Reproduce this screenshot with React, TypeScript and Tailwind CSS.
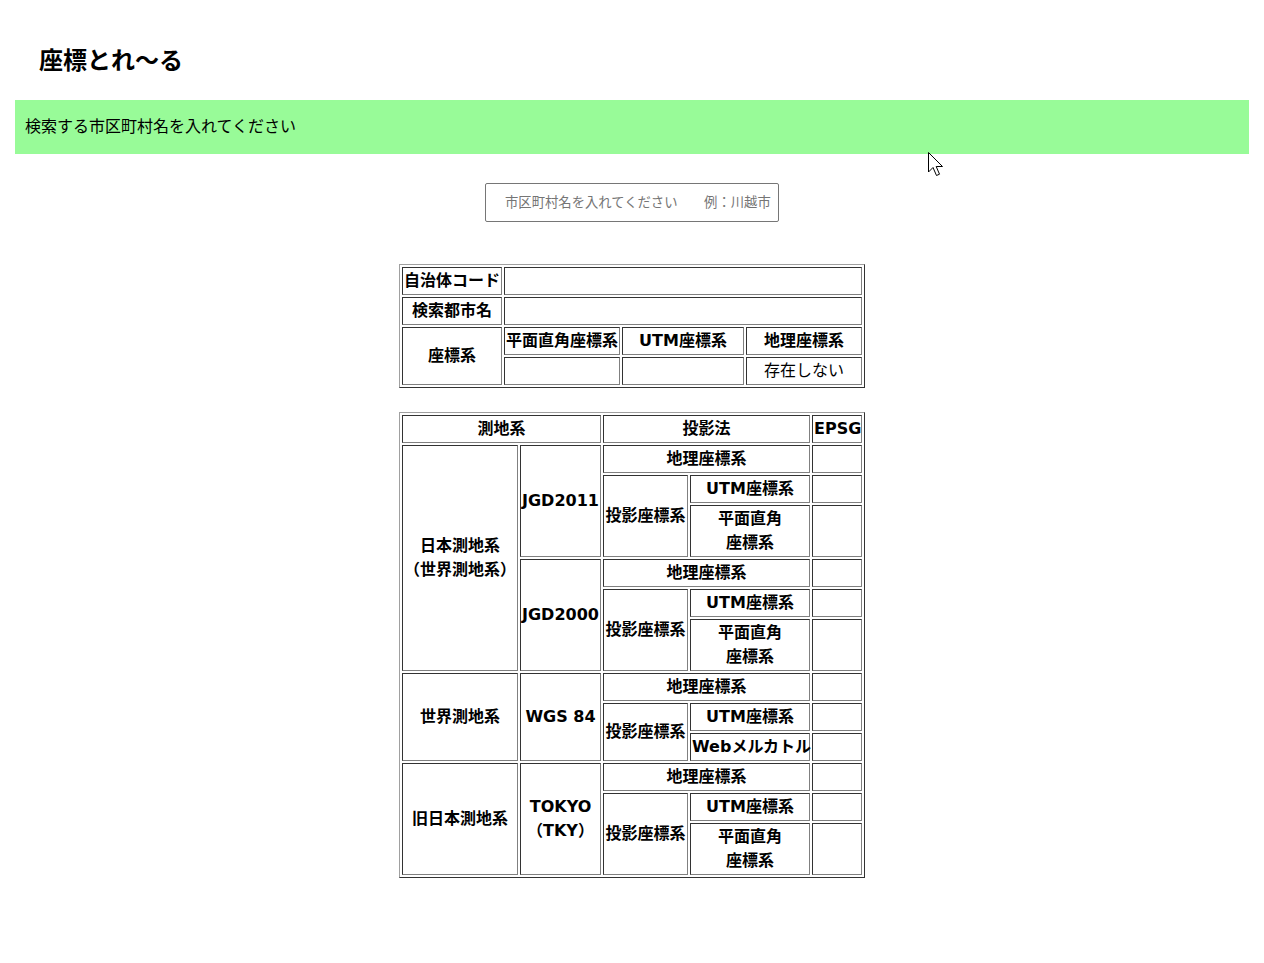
import React from 'react'

// Coordinate lookup page: title, search notice, input and two reference tables.

const th =
  'border border-t-[#333] border-l-[#333] border-b-[#808080] border-r-[#808080] p-px leading-[24px] text-[16px] font-bold text-center align-middle whitespace-nowrap'
const td =
  'border border-t-[#333] border-l-[#333] border-b-[#808080] border-r-[#808080] p-px leading-[24px] text-[16px] font-normal text-center align-middle whitespace-nowrap'
const table =
  'table-fixed border-separate border-spacing-[2px] border border-t-[#a0a0a0] border-l-[#a0a0a0] border-b-[#333] border-r-[#333] w-[466px] mx-auto'

/** Rows for one datum: geographic + projected coordinate systems. */
const DatumRows = ({
  datum,
  code,
  lastLabel,
}: {
  datum?: React.ReactNode
  code: React.ReactNode
  lastLabel: React.ReactNode
}) => (
  <>
    <tr>
      {datum && (
        <th className={th} rowSpan={3}>
          {datum}
        </th>
      )}
      <th className={th} rowSpan={3}>
        {code}
      </th>
      <th className={th} colSpan={2}>
        地理座標系
      </th>
      <td className={td}></td>
    </tr>
    <tr>
      <th className={th} rowSpan={2}>
        投影座標系
      </th>
      <th className={th}>UTM座標系</th>
      <td className={td}></td>
    </tr>
    <tr>
      <th className={th}>{lastLabel}</th>
      <td className={td}></td>
    </tr>
  </>
)

const Cursor = () => (
  <svg
    className="absolute left-[927px] top-[151px]"
    width="20"
    height="28"
    viewBox="0 0 20 28"
  >
    <path
      d="M1.5 1.5 L1.5 21 L6 16.5 L9.5 24.5 L12.5 23.2 L9.2 15.5 L15.5 15.5 Z"
      fill="#fff"
      stroke="#000"
      strokeWidth="1"
      strokeLinejoin="miter"
    />
  </svg>
)

const App = () => {
  const plane = (
    <>
      平面直角
      <br />
      座標系
    </>
  )

  return (
    <div className="relative min-h-[963px] bg-white text-black font-['DejaVu_Sans','Noto_Sans_CJK_JP',sans-serif]">
      {/* Header */}
      <h1 className="pt-[45px] pl-[39px] text-[24px] leading-[32px] font-bold">座標とれ〜る</h1>

      {/* Notice bar */}
      <div className="mx-[15px] mt-[23px] h-[54px] bg-[#98fb98] flex items-center pl-[10px] text-[16px]">
        検索する市区町村名を入れてください
      </div>

      {/* Search input */}
      <div className="mt-[29px] flex justify-center">
        <input
          type="text"
          placeholder="市区町村名を入れてください　　例：川越市"
          className="w-[294px] h-[39px] border border-[#767676] rounded-[2px] pl-[19px] pr-[4px] text-[13.33px] placeholder:text-[#757575] outline-none"
        />
      </div>

      {/* Result table */}
      <table className={`${table} mt-[42px]`}>
        <colgroup>
          <col className="w-[100px]" />
          <col className="w-[116px]" />
          <col className="w-[122px]" />
          <col className="w-[116px]" />
        </colgroup>
        <tbody>
          <tr>
            <th className={th}>自治体コード</th>
            <td className={td} colSpan={3}></td>
          </tr>
          <tr>
            <th className={th}>検索都市名</th>
            <td className={td} colSpan={3}></td>
          </tr>
          <tr>
            <th className={th} rowSpan={2}>
              座標系
            </th>
            <th className={th}>平面直角座標系</th>
            <th className={th}>UTM座標系</th>
            <th className={th}>地理座標系</th>
          </tr>
          <tr>
            <td className={td}></td>
            <td className={td}></td>
            <td className={td}>存在しない</td>
          </tr>
        </tbody>
      </table>

      {/* Datum / projection table */}
      <table className={`${table} mt-[24px]`}>
        <colgroup>
          <col className="w-[116px]" />
          <col className="w-[81px]" />
          <col className="w-[85px]" />
          <col className="w-[120px]" />
          <col className="w-[50px]" />
        </colgroup>
        <tbody>
          <tr>
            <th className={th} colSpan={2}>
              測地系
            </th>
            <th className={th} colSpan={2}>
              投影法
            </th>
            <th className={th}>EPSG</th>
          </tr>
          <tr>
            <th className={th} rowSpan={6}>
              日本測地系
              <br />
              （世界測地系）
            </th>
            <th className={th} rowSpan={3}>
              JGD2011
            </th>
            <th className={th} colSpan={2}>
              地理座標系
            </th>
            <td className={td}></td>
          </tr>
          <tr>
            <th className={th} rowSpan={2}>
              投影座標系
            </th>
            <th className={th}>UTM座標系</th>
            <td className={td}></td>
          </tr>
          <tr>
            <th className={th}>{plane}</th>
            <td className={td}></td>
          </tr>
          <DatumRows code="JGD2000" lastLabel={plane} />
          <DatumRows datum="世界測地系" code="WGS 84" lastLabel="Webメルカトル" />
          <DatumRows
            datum="旧日本測地系"
            code={
              <>
                TOKYO
                <br />
                （TKY）
              </>
            }
            lastLabel={plane}
          />
        </tbody>
      </table>

      <Cursor />
    </div>
  )
}

export default App
